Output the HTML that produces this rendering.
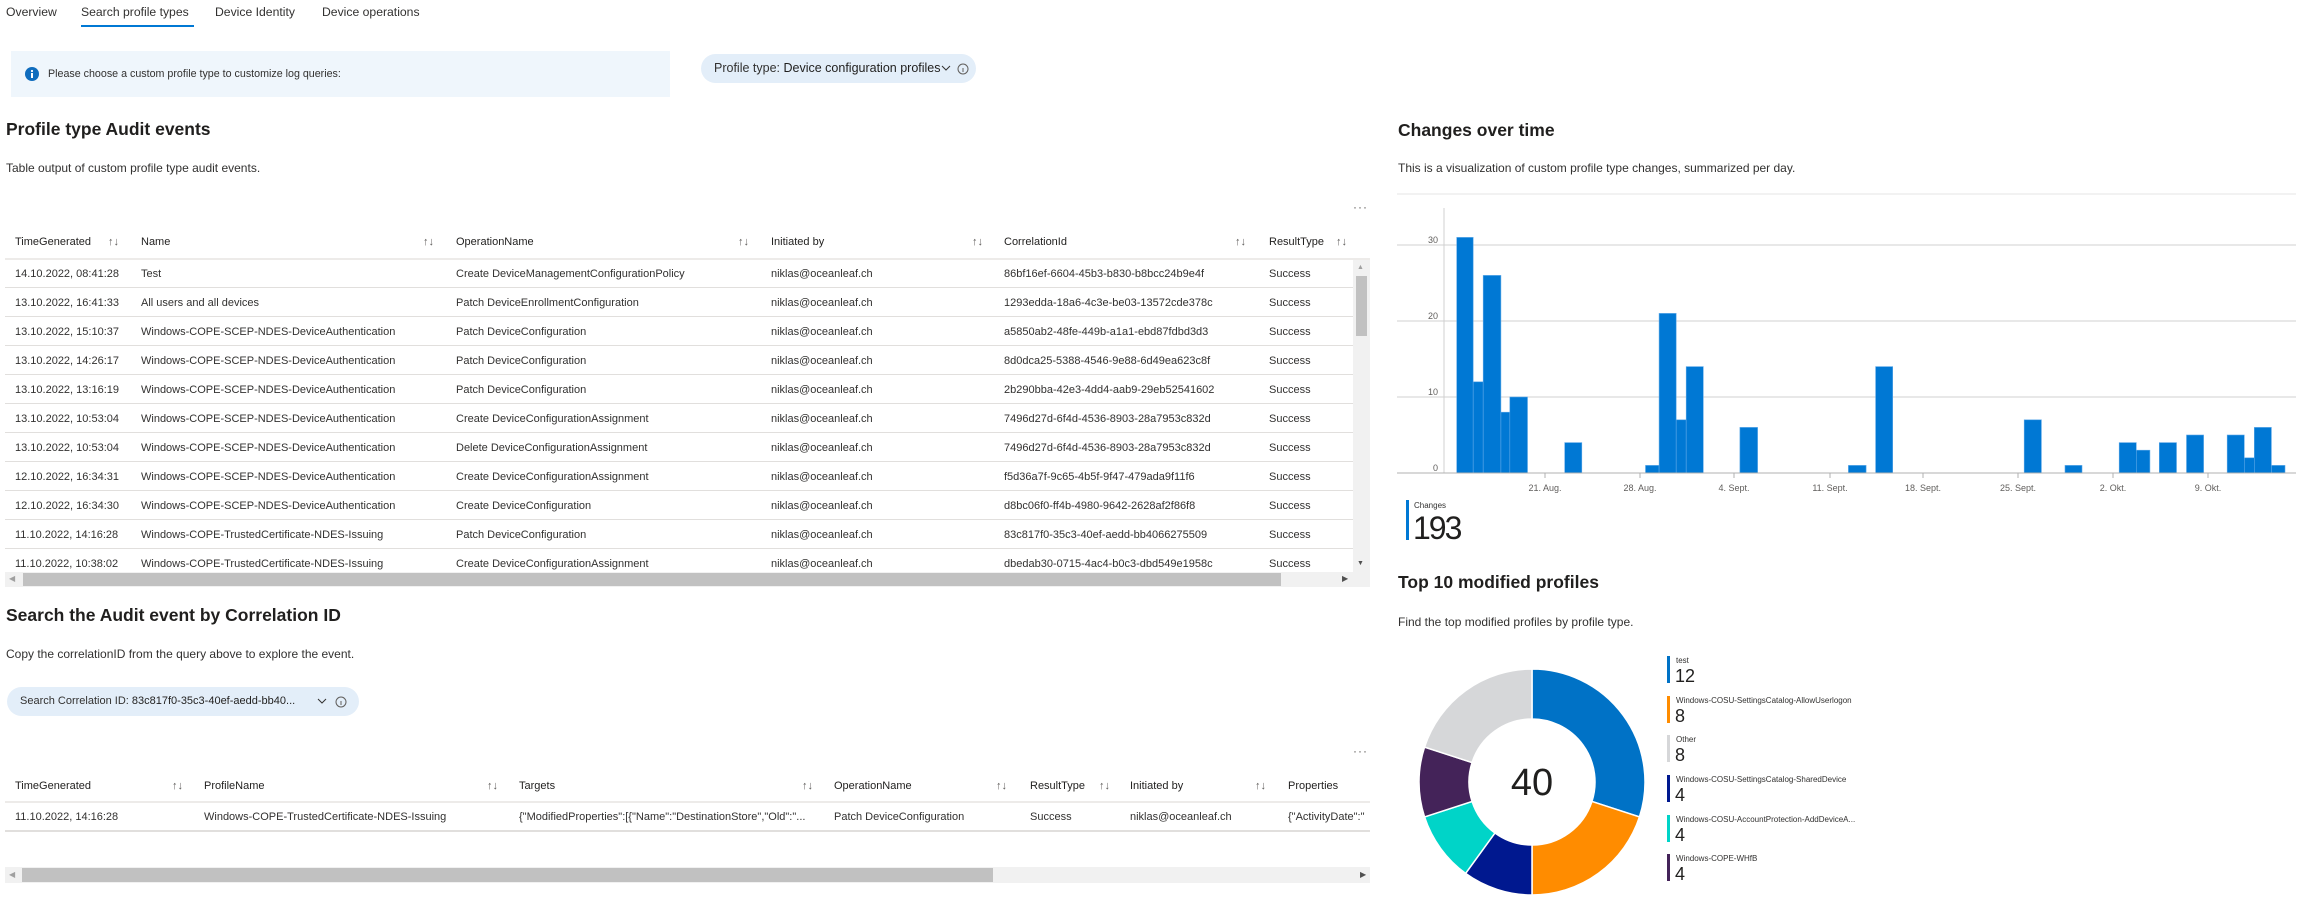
<!DOCTYPE html>
<html><head><meta charset="utf-8">
<style>
*{margin:0;padding:0;box-sizing:border-box}
body{width:2305px;height:897px;background:#fff;font-family:"Liberation Sans",Arial,sans-serif;color:#323130;position:relative;overflow:hidden;font-size:11px}
.a{position:absolute;white-space:nowrap}
.tab{font-size:12.2px;top:5px}
h2{position:absolute;font-size:17.5px;font-weight:bold;color:#201f1e;white-space:nowrap}
.sub{position:absolute;font-size:12px;white-space:nowrap}
.hd{font-size:11px;color:#201f1e}
.line{position:absolute;height:1px;background:#e1dfdd}
.sort{position:absolute;font-size:11px;color:#605e5c}
</style></head><body>
<div class="a tab" style="left:6px">Overview</div>
<div class="a tab" style="left:81px">Search profile types</div>
<div class="a tab" style="left:215px">Device Identity</div>
<div class="a tab" style="left:322px">Device operations</div>
<div class="a" style="left:81px;top:25px;width:113px;height:2px;background:#0078d4"></div>

<div class="a" style="left:11px;top:51px;width:659px;height:46px;background:#eff6fc"></div>
<svg class="a" style="left:25px;top:67px" width="14" height="14"><circle cx="7" cy="7" r="7" fill="#0f6cbd"/><rect x="6" y="6" width="2" height="5" fill="#fff"/><circle cx="7" cy="4" r="1.1" fill="#fff"/></svg>
<div class="a" style="left:48px;top:68px;font-size:10.7px">Please choose a custom profile type to customize log queries:</div>

<div class="a" style="left:701px;top:54px;width:275px;height:29px;border-radius:15px;background:#e3eef9"></div>
<div class="a" style="left:714px;top:61px;font-size:12.5px">Profile type: <span style="color:#201f1e">Device configuration profiles</span></div>
<svg class="a" style="left:941px;top:63px" width="36" height="12"><path d="M1 3l4 4 4-4" stroke="#323130" fill="none"/><circle cx="22" cy="6" r="5" stroke="#605e5c" fill="none"/><rect x="21.5" y="5" width="1" height="4" fill="#605e5c"/></svg>

<h2 style="left:6px;top:119px">Profile type Audit events</h2>
<div class="sub" style="left:6px;top:161px">Table output of custom profile type audit events.</div>
<div class="a" style="left:1353px;top:200px;color:#605e5c;font-size:12px;letter-spacing:1px">···</div>

<div class="a hd" style="left:15px;top:236px">TimeGenerated</div>
<div class="a hd" style="left:141px;top:236px">Name</div>
<div class="a hd" style="left:456px;top:236px">OperationName</div>
<div class="a hd" style="left:771px;top:236px">Initiated by</div>
<div class="a hd" style="left:1004px;top:236px">CorrelationId</div>
<div class="a hd" style="left:1269px;top:236px">ResultType</div>
<div class="sort" style="left:108px;top:236px">↑↓</div>
<div class="sort" style="left:423px;top:236px">↑↓</div>
<div class="sort" style="left:738px;top:236px">↑↓</div>
<div class="sort" style="left:972px;top:236px">↑↓</div>
<div class="sort" style="left:1235px;top:236px">↑↓</div>
<div class="sort" style="left:1336px;top:236px">↑↓</div>
<div class="line" style="left:5px;top:258px;width:1365px;height:2px;background:#edebe9"></div>
<div id="t1"></div>
<div class="a" style="left:1353px;top:260px;width:17px;height:312px;background:#f1f1f1"></div>
<div class="a" style="left:1356px;top:276px;width:11px;height:60px;background:#c1c1c1"></div>
<div class="a" style="left:1357px;top:264px;font-size:7px;color:#a0a0a0">▲</div>
<div class="a" style="left:1357px;top:560px;font-size:7px;color:#505050">▼</div>
<div class="a" style="left:5px;top:572px;width:1365px;height:15px;background:#f1f1f1"></div>
<div class="a" style="left:23px;top:573px;width:1258px;height:13px;background:#c1c1c1"></div>
<div class="a" style="left:9px;top:574px;font-size:8px;color:#a0a0a0">◀</div>
<div class="a" style="left:1342px;top:574px;font-size:8px;color:#505050">▶</div>

<h2 style="left:6px;top:605px">Search the Audit event by Correlation ID</h2>
<div class="sub" style="left:6px;top:647px">Copy the correlationID from the query above to explore the event.</div>
<div class="a" style="left:7px;top:687px;width:352px;height:29px;border-radius:15px;background:#e3eef9"></div>
<div class="a" style="left:20px;top:695px;font-size:11px">Search Correlation ID: <span style="color:#201f1e">83c817f0-35c3-40ef-aedd-bb40...</span></div>
<svg class="a" style="left:317px;top:696px" width="36" height="12"><path d="M1 3l4 4 4-4" stroke="#323130" fill="none"/><circle cx="24" cy="6" r="5" stroke="#605e5c" fill="none"/><rect x="23.5" y="5" width="1" height="4" fill="#605e5c"/></svg>
<div class="a" style="left:1353px;top:744px;color:#605e5c;font-size:12px;letter-spacing:1px">···</div>

<div class="a hd" style="left:15px;top:780px">TimeGenerated</div>
<div class="a hd" style="left:204px;top:780px">ProfileName</div>
<div class="a hd" style="left:519px;top:780px">Targets</div>
<div class="a hd" style="left:834px;top:780px">OperationName</div>
<div class="a hd" style="left:1030px;top:780px">ResultType</div>
<div class="a hd" style="left:1130px;top:780px">Initiated by</div>
<div class="a hd" style="left:1288px;top:780px">Properties</div>
<div class="sort" style="left:172px;top:780px">↑↓</div>
<div class="sort" style="left:487px;top:780px">↑↓</div>
<div class="sort" style="left:802px;top:780px">↑↓</div>
<div class="sort" style="left:996px;top:780px">↑↓</div>
<div class="sort" style="left:1099px;top:780px">↑↓</div>
<div class="sort" style="left:1255px;top:780px">↑↓</div>
<div class="line" style="left:5px;top:801px;width:1365px;height:2px;background:#edebe9"></div>
<div class="a" style="left:15px;top:811px">11.10.2022, 14:16:28</div>
<div class="a" style="left:204px;top:811px">Windows-COPE-TrustedCertificate-NDES-Issuing</div>
<div class="a" style="left:519px;top:811px;width:308px;overflow:hidden">{"ModifiedProperties":[{"Name":"DestinationStore","Old":"...</div>
<div class="a" style="left:834px;top:811px">Patch DeviceConfiguration</div>
<div class="a" style="left:1030px;top:811px">Success</div>
<div class="a" style="left:1130px;top:811px">niklas@oceanleaf.ch</div>
<div class="a" style="left:1288px;top:811px;width:82px;overflow:hidden">{"ActivityDate":"</div>
<div class="line" style="left:5px;top:830px;width:1365px;height:2px;background:#e1dfdd"></div>
<div class="a" style="left:5px;top:867px;width:1365px;height:16px;background:#f1f1f1"></div>
<div class="a" style="left:22px;top:868px;width:971px;height:14px;background:#c1c1c1"></div>
<div class="a" style="left:9px;top:870px;font-size:8px;color:#a0a0a0">◀</div>
<div class="a" style="left:1360px;top:870px;font-size:8px;color:#505050">▶</div>

<h2 style="left:1398px;top:120px">Changes over time</h2>
<div class="sub" style="left:1398px;top:161px">This is a visualization of custom profile type changes, summarized per day.</div>
<svg class="a" style="left:1380px;top:180px" width="925" height="360">
<line x1="17" y1="14" x2="916" y2="14" stroke="#e6e6e6"/>
<g stroke="#d0d0d0"><line x1="17" y1="65" x2="916" y2="65"/><line x1="17" y1="141" x2="916" y2="141"/><line x1="17" y1="217" x2="916" y2="217"/><line x1="64" y1="28" x2="64" y2="293"/></g>
<g fill="#0078d4" stroke="#5ea8e8" stroke-width="0.6" id="bars"></g>
<line x1="17" y1="293" x2="916" y2="293" stroke="#b0b0b0"/>
<g font-size="9" fill="#605e5c" text-anchor="end" font-family="Liberation Sans,sans-serif">
<text x="58" y="63">30</text><text x="58" y="139">20</text><text x="58" y="215">10</text><text x="58" y="291">0</text></g>
<g font-size="9" fill="#605e5c" text-anchor="middle" font-family="Liberation Sans,sans-serif" id="xl"></g>
<rect x="26" y="320" width="3" height="40" fill="#0078d4"/>
<text x="34" y="328" font-size="8" fill="#323130" font-family="Liberation Sans,sans-serif">Changes</text>
<text x="33" y="359" font-size="32" fill="#201f1e" font-family="Liberation Sans,sans-serif" letter-spacing="-2">193</text>
</svg>

<h2 style="left:1398px;top:572px">Top 10 modified profiles</h2>
<div class="sub" style="left:1398px;top:615px">Find the top modified profiles by profile type.</div>
<svg class="a" style="left:1380px;top:640px" width="925" height="257" id="donut">
<text x="152" y="155" font-size="38" fill="#201f1e" text-anchor="middle" font-family="Liberation Sans,sans-serif">40</text>
</svg>
<script>
const rows=[["14.10.2022, 08:41:28","Test","Create DeviceManagementConfigurationPolicy","86bf16ef-6604-45b3-b830-b8bcc24b9e4f"],
["13.10.2022, 16:41:33","All users and all devices","Patch DeviceEnrollmentConfiguration","1293edda-18a6-4c3e-be03-13572cde378c"],
["13.10.2022, 15:10:37","Windows-COPE-SCEP-NDES-DeviceAuthentication","Patch DeviceConfiguration","a5850ab2-48fe-449b-a1a1-ebd87fdbd3d3"],
["13.10.2022, 14:26:17","Windows-COPE-SCEP-NDES-DeviceAuthentication","Patch DeviceConfiguration","8d0dca25-5388-4546-9e88-6d49ea623c8f"],
["13.10.2022, 13:16:19","Windows-COPE-SCEP-NDES-DeviceAuthentication","Patch DeviceConfiguration","2b290bba-42e3-4dd4-aab9-29eb52541602"],
["13.10.2022, 10:53:04","Windows-COPE-SCEP-NDES-DeviceAuthentication","Create DeviceConfigurationAssignment","7496d27d-6f4d-4536-8903-28a7953c832d"],
["13.10.2022, 10:53:04","Windows-COPE-SCEP-NDES-DeviceAuthentication","Delete DeviceConfigurationAssignment","7496d27d-6f4d-4536-8903-28a7953c832d"],
["12.10.2022, 16:34:31","Windows-COPE-SCEP-NDES-DeviceAuthentication","Create DeviceConfigurationAssignment","f5d36a7f-9c65-4b5f-9f47-479ada9f11f6"],
["12.10.2022, 16:34:30","Windows-COPE-SCEP-NDES-DeviceAuthentication","Create DeviceConfiguration","d8bc06f0-ff4b-4980-9642-2628af2f86f8"],
["11.10.2022, 14:16:28","Windows-COPE-TrustedCertificate-NDES-Issuing","Patch DeviceConfiguration","83c817f0-35c3-40ef-aedd-bb4066275509"],
["11.10.2022, 10:38:02","Windows-COPE-TrustedCertificate-NDES-Issuing","Create DeviceConfigurationAssignment","dbedab30-0715-4ac4-b0c3-dbd549e1958c"]];
let h="";
rows.forEach((r,i)=>{const y=268+i*29;
h+=`<div class="a" style="left:15px;top:${y}px">${r[0]}</div><div class="a" style="left:141px;top:${y}px">${r[1]}</div><div class="a" style="left:456px;top:${y}px">${r[2]}</div><div class="a" style="left:771px;top:${y}px">niklas@oceanleaf.ch</div><div class="a" style="left:1004px;top:${y}px">${r[3]}</div><div class="a" style="left:1269px;top:${y}px">Success</div>`;
if(i<10)h+=`<div class="line" style="left:5px;top:${y+19}px;width:1348px;background:#e1dfdd"></div>`;});
document.getElementById('t1').outerHTML=h;
const B=[[1456.7,1473.2,31],[1473.2,1483.2,12],[1483.2,1500.9,26],[1500.9,1509.8,8],[1509.8,1527.5,10],[1564.7,1581.8,4],[1645.5,1659.1,1],[1659.1,1676.2,21],[1676.2,1686.2,7],[1686.2,1703.3,14],[1739.9,1757.6,6],[1848.4,1866.1,1],[1875.6,1892.7,14],[2024.2,2041.4,7],[2065,2082,1],[2119.2,2136.3,4],[2136.3,2149.9,3],[2159.3,2176.5,4],[2186.5,2203.6,5],[2227.2,2244.3,5],[2244.3,2254.3,2],[2254.3,2271.4,6],[2271.4,2285,1]];
let s="";B.forEach(b=>{const hh=b[2]*7.6;s+=`<rect x="${b[0]-1380}" y="${293-hh}" width="${b[1]-b[0]}" height="${hh}"/>`});
document.getElementById('bars').innerHTML=s;
const X=[["21. Aug.",1545],["28. Aug.",1640],["4. Sept.",1734],["11. Sept.",1830],["18. Sept.",1923],["25. Sept.",2018],["2. Okt.",2113],["9. Okt.",2208]];
let t="";X.forEach(x=>{const xx=x[1]-1380;t+=`<line x1="${xx}" y1="293" x2="${xx}" y2="298" stroke="#b0b0b0"/><text x="${xx}" y="311">${x[0]}</text>`});
document.getElementById('xl').innerHTML=t;
const D=[[12,"#0072c6"],[8,"#ff8c00"],[4,"#00188f"],[4,"#00d4c8"],[4,"#442359"],[8,"#d6d7d9"]];
const cx=152,cy=142,R=113,r=63;let a=0,p="";
function pt(rad,ang){return [cx+rad*Math.sin(ang),cy-rad*Math.cos(ang)]}
D.forEach(d=>{const a1=a+d[0]/40*2*Math.PI;const l=(a1-a)>Math.PI?1:0;
const [x1,y1]=pt(R,a),[x2,y2]=pt(R,a1),[x3,y3]=pt(r,a1),[x4,y4]=pt(r,a);
p+=`<path d="M${x1} ${y1}A${R} ${R} 0 ${l} 1 ${x2} ${y2}L${x3} ${y3}A${r} ${r} 0 ${l} 0 ${x4} ${y4}Z" fill="${d[1]}" stroke="#fff" stroke-width="1.5"/>`;a=a1;});
const L=[[0,"test",12,"#0072c6"],[1,"Windows-COSU-SettingsCatalog-AllowUserlogon",8,"#ff8c00"],[2,"Other",8,"#d6d7d9"],[3,"Windows-COSU-SettingsCatalog-SharedDevice",4,"#00188f"],[4,"Windows-COSU-AccountProtection-AddDeviceA...",4,"#00d4c8"],[5,"Windows-COPE-WHfB",4,"#442359"]];
const ys=[16,56,95,135,175,214];
L.forEach(l=>{const y=ys[l[0]];p+=`<rect x="287" y="${y}" width="3" height="27" fill="${l[3]}"/><text x="296" y="${y+7}" font-size="8" fill="#323130" font-family="Liberation Sans,sans-serif">${l[1]}</text><text x="295" y="${y+26}" font-size="18" fill="#201f1e" font-family="Liberation Sans,sans-serif">${l[2]}</text>`});
const g=document.getElementById('donut');g.innerHTML=p+g.innerHTML;
</script>
</body></html>
